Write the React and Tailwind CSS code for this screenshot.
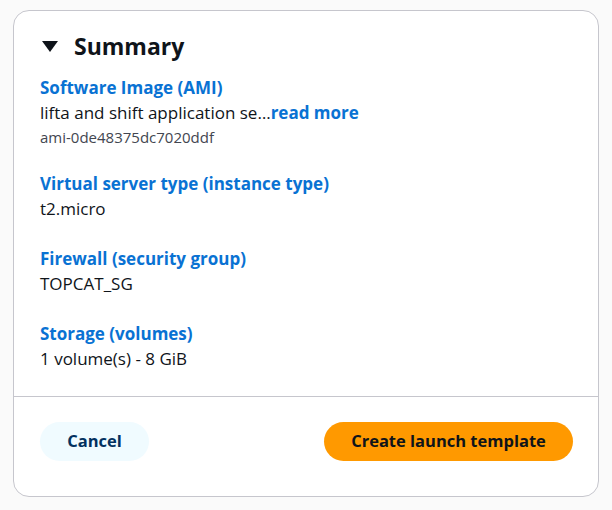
export default function App() {
  const font = { fontFamily: '"Open Sans", "Noto Sans", sans-serif' };
  const Section = ({ label, value, sub }) => (
    <div className="flex flex-col">
      <div className="text-[17px] leading-[24px] font-bold text-[#0972d3]">{label}</div>
      <div className="text-[17px] leading-[26px] text-[#0f141a]">{value}</div>
      {sub && <div className="text-[15px] leading-[20px] text-[#424650] mt-[1px]">{sub}</div>}
    </div>
  );
  return (
    <div className="w-[612px] h-[510px] bg-[#fafafa] pt-[10px] pl-[13px]" style={font}>
      <div className="w-[586px] h-[487px] bg-white border border-[#c6c6cd] rounded-[16px] flex flex-col">
        <div className="pl-[26px] pt-[20px] pb-[24px] border-b border-[#c6c6cd] flex flex-col">
          <div className="flex items-center h-[30px]">
            <svg width="16" height="12" viewBox="0 0 16 12" className="ml-[2px] mr-[16px]">
              <polygon points="0,1 16,1 8,12" fill="#0f141a" />
            </svg>
            <span className="text-[23px] leading-[30px] font-bold text-[#0f141a]">Summary</span>
          </div>
          <div className="mt-[15px] flex flex-col gap-[25px]">
            <Section
              label="Software Image (AMI)"
              value={<>lifta and shift application se…<span className="font-bold text-[#0972d3]">read more</span></>}
              sub="ami-0de48375dc7020ddf"
            />
            <Section label="Virtual server type (instance type)" value="t2.micro" />
            <Section label="Firewall (security group)" value="TOPCAT_SG" />
            <Section label="Storage (volumes)" value="1 volume(s) - 8 GiB" />
          </div>
        </div>
        <div className="flex justify-between items-center pl-[26px] pr-[25px] pt-[25px]">
          <button className="w-[109px] h-[39px] rounded-full bg-[#f0fbff] text-[#033160] font-bold text-[16.5px]">Cancel</button>
          <button className="w-[249px] h-[39px] rounded-full bg-[#ff9900] text-[#0f141a] font-bold text-[16.5px]">Create launch template</button>
        </div>
      </div>
    </div>
  );
}
